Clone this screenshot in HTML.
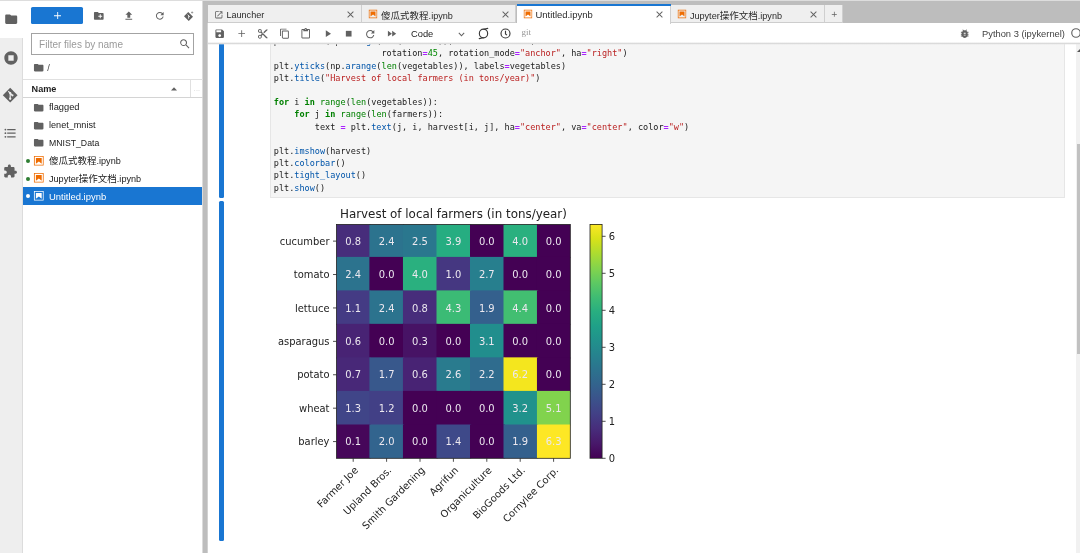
<!DOCTYPE html>
<html lang="zh">
<head>
<meta charset="utf-8">
<title>JupyterLab</title>
<style>
html,body{margin:0;padding:0}
body{width:1080px;height:553px;overflow:hidden;background:#fff;position:relative;
  font-family:"Liberation Sans","Noto Sans CJK SC",sans-serif;font-size:9.1px;color:#212121}
.abs{position:absolute}
svg{display:block}
.ico{position:absolute;fill:#616161}
/* dock background */
#dock{left:202.6px;top:0;width:878px;height:553px;background:#bdbdbd}
#main{left:207.7px;top:22.5px;width:873px;height:531px;background:#fff}
/* sidebar */
#sb{left:0;top:0;width:22.5px;height:553px;background:#eee;border-right:0.7px solid #dcdcdc;box-sizing:border-box}
#sbact{left:0;top:0;width:23px;height:38px;background:#fff}
#topline{left:0;top:0;width:1080px;height:1px;background:#dddddd}
/* file browser */
#newbtn{left:31.3px;top:6.5px;width:51.7px;height:17.5px;background:#1976d2;border-radius:1.6px}
#filter{left:31.3px;top:33px;width:162.7px;height:22px;box-sizing:border-box;border:1px solid #a3a3a3;background:#fff}
#filter span{position:absolute;left:6.8px;top:4.9px;font-size:10px;color:#9a9a9a;font-family:"Liberation Sans",sans-serif}
.row{position:absolute;left:23px;width:179.4px;height:17.8px;line-height:17.8px;white-space:nowrap}
.row .nm{position:absolute;left:26px;top:0.9px;font-size:9.1px}
.row .ico{margin-top:0.5px}
.row.sel{background:#1976d2;color:#fff}
.dot{position:absolute;left:3.4px;top:7.4px;width:4px;height:4px;border-radius:50%;background:#2e7d32}
.sel .dot{background:#fff}
/* tabs */
.tab{position:absolute;top:4.6px;height:18.4px;box-sizing:border-box;background:#efefef;border-right:1px solid #cfcfcf;border-bottom:1px solid #cdcdcd;line-height:17px;white-space:nowrap}
.tab.act{background:#fff;border-bottom:none;height:19px}
.tab.act:before{content:"";position:absolute;left:0;right:-1px;top:-0.3px;height:1.6px;background:#1976d2}
.tab .lbl{position:absolute;top:2.4px;font-size:9.1px;color:#2a2a2a}
.tab .ico{margin-top:1.3px}
.cj{font-size:9.5px}
/* toolbar */
#tb{left:207.7px;top:23px;width:873px;height:21px;background:#fff}
#tbsh{left:207.7px;top:42px;width:873px;height:3.4px;background:linear-gradient(rgba(255,255,255,0),rgba(218,218,218,1) 50%,rgba(228,228,228,0.55) 75%,rgba(240,240,240,0));z-index:5}
/* cell */
.coll{position:absolute;left:218.7px;width:5.6px;background:#1976d2;border-radius:1.5px}
#editor{left:270px;top:30px;width:794.6px;height:167.7px;box-sizing:border-box;background:#f5f5f5;border:1px solid #e6e6e6;overflow:hidden}
#code{position:absolute;left:2.8px;top:4.2px;font-family:"DejaVu Sans Mono","Liberation Mono",monospace;font-size:8.53px;color:#212121}
.cl{height:12.21px;line-height:12.21px;white-space:pre}
.k{color:#008000;font-weight:bold}.b{color:#008000}.n{color:#008800}.s{color:#ba2121}.o{color:#aa22ff;font-weight:bold}.p{color:#0055aa}
/* scrollbar */
#sbtrack{left:1076px;top:43px;width:4px;height:510px;background:#f1f1f1}
#sbthumb{left:1076.6px;top:144px;width:3.4px;height:210px;background:#c1c1c1}
</style>
</head>
<body>
<div id="root" class="abs" style="left:0;top:0;width:1080px;height:553px;will-change:transform">
<div id="dock" class="abs"></div>
<div id="main" class="abs"></div>
<div class="abs" style="left:202px;top:1px;width:1px;height:552px;background:rgba(189,189,189,0.55)"></div>
<div class="abs" style="left:207px;top:23px;width:1px;height:530px;background:rgba(255,255,255,0.3)"></div>

<!-- ===== left sidebar ===== -->
<div id="sb" class="abs"></div>
<div id="sbact" class="abs"></div>
<svg class="ico" style="left:3.8px;top:11.9px" width="14.4" height="14.4" viewBox="0 0 24 24"><path d="M10 4H4c-1.1 0-1.99.9-1.99 2L2 18c0 1.1.9 2 2 2h16c1.1 0 2-.9 2-2V8c0-1.1-.9-2-2-2h-8l-2-2z"/></svg>
<svg class="ico" style="left:2.6px;top:49.7px" width="16" height="16" viewBox="0 0 24 24"><path d="M12 2C6.48 2 2 6.48 2 12s4.48 10 10 10 10-4.48 10-10S17.52 2 12 2zm4 14H8V8h8v8z"/></svg>
<svg class="ico" style="left:2.4px;top:87.4px" width="16.4" height="16.4" viewBox="0 0 24 24"><path d="M12 1.2 22.8 12 12 22.8 1.2 12z"/><g fill="none" stroke="#eee" stroke-width="1.7"><path d="M9.2 6.2 14.6 11.6M12 9v8.3M14.9 12v0"/></g><circle cx="12" cy="17.2" r="1.7" fill="#eee"/><circle cx="15.2" cy="12.2" r="1.7" fill="#eee"/><circle cx="12" cy="9" r="1.7" fill="#eee"/></svg>
<svg class="ico" style="left:3.4px;top:125.7px" width="14.4" height="14.4" viewBox="0 0 24 24"><path d="M7,5H21V7H7V5M7,13V11H21V13H7M4,4.5A1.5,1.5 0 0,1 5.5,6A1.5,1.5 0 0,1 4,7.5A1.5,1.5 0 0,1 2.5,6A1.5,1.5 0 0,1 4,4.5M4,10.5A1.5,1.5 0 0,1 5.5,12A1.5,1.5 0 0,1 4,13.5A1.5,1.5 0 0,1 2.5,12A1.5,1.5 0 0,1 4,10.5M7,19V17H21V19H7M4,16.5A1.5,1.5 0 0,1 5.5,18A1.5,1.5 0 0,1 4,19.5A1.5,1.5 0 0,1 2.5,18A1.5,1.5 0 0,1 4,16.5Z"/></svg>
<svg class="ico" style="left:3.2px;top:164px" width="14.6" height="14.6" viewBox="0 0 24 24"><path d="M20.5 11H19V7c0-1.1-.9-2-2-2h-4V3.500C13 2.120 11.880 1 10.500 1S8 2.120 8 3.500V5H4c-1.100 0-1.990.9-1.990 2v3.800H3.500c1.490 0 2.700 1.210 2.700 2.700s-1.210 2.700-2.700 2.700H2V20c0 1.100.9 2 2 2h3.800v-1.500c0-1.490 1.210-2.700 2.700-2.700 1.490 0 2.700 1.210 2.700 2.700V22H17c1.100 0 2-.9 2-2v-4h1.500c1.380 0 2.500-1.120 2.500-2.500S21.880 11 20.500 11z"/></svg>


<!-- ===== file browser ===== -->
<div id="fb" class="abs" style="left:23px;top:1px;width:179px;height:552px;background:#fff"></div>
<div id="newbtn" class="abs"><svg class="abs" style="left:22.3px;top:5.2px" width="7.4" height="7.4" viewBox="0 0 10 10"><path d="M4.4 0h1.2v4.400H10v1.200H5.600V10H4.400V5.600H0V4.400h4.400z" fill="#fff"/></svg></div>
<svg class="ico" style="left:93.3px;top:10.3px" width="11.6" height="11.6" viewBox="0 0 24 24"><path d="M20 6h-8l-2-2H4c-1.110 0-1.990.89-1.990 2L2 18c0 1.110.89 2 2 2h16c1.110 0 2-.89 2-2V8c0-1.110-.89-2-2-2zm-1 8h-3v3h-2v-3h-3v-2h3V9h2v3h3v2z"/></svg>
<svg class="ico" style="left:123.2px;top:9.6px" width="11.6" height="11.6" viewBox="0 0 24 24"><path d="M9 16h6v-6h4l-7-7-7 7h4zm-4 2h14v2H5z"/></svg>
<svg class="ico" style="left:153.5px;top:9.700px" width="11.6" height="11.6" viewBox="0 0 18 18"><path d="M9 13.500c-2.490 0-4.500-2.010-4.500-4.500S6.510 4.500 9 4.500c1.240 0 2.360.52 3.170 1.330L10 8h5V3l-1.760 1.760C12.150 3.680 10.660 3 9 3 5.690 3 3.010 5.690 3.010 9S5.690 15 9 15c2.970 0 5.430-2.160 5.900-5h-1.520c-.46 2-2.240 3.500-4.380 3.500z"/></svg>
<svg class="ico" style="left:183px;top:10px" width="12" height="12" viewBox="0 0 24 24"><path d="M10.500 4.200 20 13.700 11.500 22.200 2 12.700z"/><path d="M9.200 9.200 13.800 13.800M11.200 11.200v6" stroke="#fff" stroke-width="1.6" fill="none"/><path d="M18.300 2.800v4.400M16.100 5h4.400" stroke="#8a8a8a" stroke-width="1.500" fill="none"/></svg>
<div id="filter" class="abs"><span>Filter files by name</span><svg class="ico" style="left:146.5px;top:4.300px" width="11.6" height="11.6" viewBox="0 0 18 18"><path d="M12.100,10.900h-0.700l-0.200-0.200c0.800-0.900,1.300-2.200,1.300-3.500c0-3-2.400-5.400-5.400-5.400S1.800,4.200,1.800,7.100s2.400,5.400,5.400,5.400 c1.300,0,2.500-0.500,3.500-1.300l0.200,0.200v0.700l4.100,4.100l1.200-1.200L12.100,10.900z M7.100,10.900c-2.100,0-3.700-1.700-3.700-3.700s1.700-3.700,3.700-3.700s3.700,1.700,3.700,3.700 S9.200,10.900,7.100,10.900z"/></svg></div>
<svg class="ico" style="left:32.8px;top:61.8px" width="11.4" height="11.4" viewBox="0 0 24 24"><path d="M10 4H4c-1.100 0-1.990.9-1.990 2L2 18c0 1.100.9 2 2 2h16c1.100 0 2-.9 2-2V8c0-1.100-.9-2-2-2h-8l-2-2z"/></svg>
<div class="abs" style="left:47.2px;top:62.8px;font-size:9.3px;color:#424242">/</div>
<!-- header -->
<div class="abs" style="left:23px;top:79px;width:179.6px;height:0.8px;background:#e0e0e0"></div>
<div class="abs" style="left:23px;top:97px;width:179.6px;height:0.8px;background:#d4d4d4"></div>
<div class="abs" style="left:31.6px;top:84.2px;font-size:9.1px;font-weight:bold;color:#212121">Name</div>
<svg class="ico" style="left:171.3px;top:86.6px" width="6" height="4" viewBox="0 0 6 4"><path d="M0 3.600 3 0.300 6 3.600z"/></svg>
<div class="abs" style="left:190px;top:79.7px;width:0.7px;height:17px;background:#e0e0e0"></div>
<div class="abs" style="left:193.8px;top:85px;font-size:7px;color:#d0d0d0;letter-spacing:0.2px">...</div>
<!-- rows -->
<div class="row" style="top:98.1px"><svg class="ico" style="left:9.600px;top:3.300px" width="11.4" height="11.4" viewBox="0 0 24 24"><path d="M10 4H4c-1.100 0-1.990.9-1.990 2L2 18c0 1.100.9 2 2 2h16c1.100 0 2-.9 2-2V8c0-1.100-.9-2-2-2h-8l-2-2z"/></svg><span class="nm" style="font-size:9.3px">flagged</span></div>
<div class="row" style="top:115.9px"><svg class="ico" style="left:9.600px;top:3.300px" width="11.4" height="11.4" viewBox="0 0 24 24"><path d="M10 4H4c-1.100 0-1.990.9-1.990 2L2 18c0 1.100.9 2 2 2h16c1.100 0 2-.9 2-2V8c0-1.100-.9-2-2-2h-8l-2-2z"/></svg><span class="nm">lenet_mnist</span></div>
<div class="row" style="top:133.700px"><svg class="ico" style="left:9.600px;top:3.300px" width="11.4" height="11.4" viewBox="0 0 24 24"><path d="M10 4H4c-1.100 0-1.990.9-1.990 2L2 18c0 1.100.9 2 2 2h16c1.100 0 2-.9 2-2V8c0-1.100-.9-2-2-2h-8l-2-2z"/></svg><span class="nm" style="font-size:8.700px">MNIST_Data</span></div>
<div class="row" style="top:151.500px"><i class="dot"></i><svg class="ico" style="left:10.000px;top:2.500px;fill:#ef6c00" width="11.600" height="11.600" viewBox="0 0 22 22"><path d="M18.700 3.300v15.400H3.300V3.300h15.400m1.500-1.500H1.800v18.300h18.300l.1-18.300z"/><path d="M16.500 16.500l-5.400-4.300-5.600 4.300v-11h11z"/></svg><span class="nm"><span class="cj">傻瓜式教程</span>.ipynb</span></div>
<div class="row" style="top:169.300px"><i class="dot"></i><svg class="ico" style="left:10.000px;top:2.500px;fill:#ef6c00" width="11.600" height="11.600" viewBox="0 0 22 22"><path d="M18.700 3.300v15.400H3.300V3.300h15.400m1.500-1.500H1.800v18.300h18.300l.1-18.300z"/><path d="M16.500 16.500l-5.400-4.300-5.600 4.300v-11h11z"/></svg><span class="nm">Jupyter<span class="cj">操作文档</span>.ipynb</span></div>
<div class="row sel" style="top:187.100px"><i class="dot"></i><svg class="ico" style="left:10.000px;top:2.500px;fill:#fff" width="11.600" height="11.600" viewBox="0 0 22 22"><path d="M18.700 3.300v15.400H3.300V3.300h15.400m1.500-1.500H1.800v18.300h18.300l.1-18.300z"/><path d="M16.500 16.500l-5.400-4.300-5.600 4.300v-11h11z"/></svg><span class="nm" style="font-size:9.45px">Untitled.ipynb</span></div>


<!-- ===== notebook ===== -->
<div class="coll" style="top:40px;height:157.7px"></div>
<div class="coll" style="top:201.2px;height:339.8px"></div>
<div id="editor" class="abs"><div id="code">
<div class="cl">plt.<span class="p">xticks</span>(np.<span class="p">arange</span>(<span class="b">len</span>(farmers)), labels<span class="o">=</span>farmers,</div>
<div class="cl">                     rotation<span class="o">=</span><span class="n">45</span>, rotation_mode<span class="o">=</span><span class="s">&quot;anchor&quot;</span>, ha<span class="o">=</span><span class="s">&quot;right&quot;</span>)</div>
<div class="cl">plt.<span class="p">yticks</span>(np.<span class="p">arange</span>(<span class="b">len</span>(vegetables)), labels<span class="o">=</span>vegetables)</div>
<div class="cl">plt.<span class="p">title</span>(<span class="s">&quot;Harvest of local farmers (in tons/year)&quot;</span>)</div>
<div class="cl">&nbsp;</div>
<div class="cl"><span class="k">for</span> i <span class="k">in</span> <span class="b">range</span>(<span class="b">len</span>(vegetables)):</div>
<div class="cl">    <span class="k">for</span> j <span class="k">in</span> <span class="b">range</span>(<span class="b">len</span>(farmers)):</div>
<div class="cl">        text <span class="o">=</span> plt.<span class="p">text</span>(j, i, harvest[i, j], ha<span class="o">=</span><span class="s">&quot;center&quot;</span>, va<span class="o">=</span><span class="s">&quot;center&quot;</span>, color<span class="o">=</span><span class="s">&quot;w&quot;</span>)</div>
<div class="cl">&nbsp;</div>
<div class="cl">plt.<span class="p">imshow</span>(harvest)</div>
<div class="cl">plt.<span class="p">colorbar</span>()</div>
<div class="cl">plt.<span class="p">tight_layout</span>()</div>
<div class="cl">plt.<span class="p">show</span>()</div>
</div></div>
<div class="abs" style="left:590.0px;top:224.4px;width:12.10px;height:233.90px;background:linear-gradient(to top,#440154 0.00%,#48186a 6.25%,#472d7b 12.50%,#424086 18.75%,#3b528b 25.00%,#33638d 31.25%,#2c728e 37.50%,#26828e 43.75%,#21918c 50.00%,#1fa088 56.25%,#28ae80 62.50%,#3fbc73 68.75%,#5ec962 75.00%,#84d44b 81.25%,#addc30 87.50%,#d8e219 93.75%,#fde725 100.00%)"></div>
<svg class="abs" style="left:0;top:0" width="1080" height="553" viewBox="0 0 1080 553" font-family="'DejaVu Sans',sans-serif">
<rect x="336.50" y="224.40" width="34.10" height="33.70" fill="#472d7b"/>
<rect x="369.40" y="224.40" width="34.75" height="33.70" fill="#2c738e"/>
<rect x="402.95" y="224.40" width="34.75" height="33.70" fill="#2a778e"/>
<rect x="436.50" y="224.40" width="34.70" height="33.70" fill="#26ad81"/>
<rect x="470.00" y="224.40" width="34.70" height="33.70" fill="#440154"/>
<rect x="503.50" y="224.40" width="34.65" height="33.70" fill="#2ab07f"/>
<rect x="536.95" y="224.40" width="33.35" height="33.70" fill="#440154"/>
<rect x="336.50" y="256.90" width="34.10" height="34.70" fill="#2c738e"/>
<rect x="369.40" y="256.90" width="34.75" height="34.70" fill="#440154"/>
<rect x="402.95" y="256.90" width="34.75" height="34.70" fill="#2ab07f"/>
<rect x="436.50" y="256.90" width="34.70" height="34.70" fill="#453781"/>
<rect x="470.00" y="256.90" width="34.70" height="34.70" fill="#277f8e"/>
<rect x="503.50" y="256.90" width="34.65" height="34.70" fill="#440154"/>
<rect x="536.95" y="256.90" width="33.35" height="34.70" fill="#440154"/>
<rect x="336.50" y="290.40" width="34.10" height="34.65" fill="#443b84"/>
<rect x="369.40" y="290.40" width="34.75" height="34.65" fill="#2c738e"/>
<rect x="402.95" y="290.40" width="34.75" height="34.65" fill="#472d7b"/>
<rect x="436.50" y="290.40" width="34.70" height="34.65" fill="#3bbb75"/>
<rect x="470.00" y="290.40" width="34.70" height="34.65" fill="#34608d"/>
<rect x="503.50" y="290.40" width="34.65" height="34.65" fill="#42be71"/>
<rect x="536.95" y="290.40" width="33.35" height="34.65" fill="#440154"/>
<rect x="336.50" y="323.85" width="34.10" height="34.70" fill="#482374"/>
<rect x="369.40" y="323.85" width="34.75" height="34.70" fill="#440154"/>
<rect x="402.95" y="323.85" width="34.75" height="34.70" fill="#471365"/>
<rect x="436.50" y="323.85" width="34.70" height="34.70" fill="#440154"/>
<rect x="470.00" y="323.85" width="34.70" height="34.70" fill="#218e8d"/>
<rect x="503.50" y="323.85" width="34.65" height="34.70" fill="#440154"/>
<rect x="536.95" y="323.85" width="33.35" height="34.70" fill="#440154"/>
<rect x="336.50" y="357.35" width="34.10" height="34.75" fill="#482878"/>
<rect x="369.40" y="357.35" width="34.75" height="34.75" fill="#38588c"/>
<rect x="402.95" y="357.35" width="34.75" height="34.75" fill="#482374"/>
<rect x="436.50" y="357.35" width="34.70" height="34.75" fill="#297b8e"/>
<rect x="470.00" y="357.35" width="34.70" height="34.75" fill="#2f6c8e"/>
<rect x="503.50" y="357.35" width="34.65" height="34.75" fill="#f4e61e"/>
<rect x="536.95" y="357.35" width="33.35" height="34.75" fill="#440154"/>
<rect x="336.50" y="390.90" width="34.10" height="34.80" fill="#404588"/>
<rect x="369.40" y="390.90" width="34.75" height="34.80" fill="#424086"/>
<rect x="402.95" y="390.90" width="34.75" height="34.80" fill="#440154"/>
<rect x="436.50" y="390.90" width="34.70" height="34.80" fill="#440154"/>
<rect x="470.00" y="390.90" width="34.70" height="34.80" fill="#440154"/>
<rect x="503.50" y="390.90" width="34.65" height="34.80" fill="#20928c"/>
<rect x="536.95" y="390.90" width="33.35" height="34.80" fill="#81d34d"/>
<rect x="336.50" y="424.50" width="34.10" height="33.80" fill="#46075a"/>
<rect x="369.40" y="424.50" width="34.75" height="33.80" fill="#32648e"/>
<rect x="402.95" y="424.50" width="34.75" height="33.80" fill="#440154"/>
<rect x="436.50" y="424.50" width="34.70" height="33.80" fill="#3e4989"/>
<rect x="470.00" y="424.50" width="34.70" height="33.80" fill="#440154"/>
<rect x="503.50" y="424.50" width="34.65" height="33.80" fill="#34608d"/>
<rect x="536.95" y="424.50" width="33.35" height="33.80" fill="#fde725"/>
<rect x="336.5" y="224.4" width="233.80" height="233.90" fill="none" stroke="#222" stroke-width="0.8"/>
<text x="353.20" y="244.71" font-size="9.93" fill="#ece8ef" text-anchor="middle">0.8</text>
<text x="386.60" y="244.71" font-size="9.93" fill="#ece8ef" text-anchor="middle">2.4</text>
<text x="420.00" y="244.71" font-size="9.93" fill="#ece8ef" text-anchor="middle">2.5</text>
<text x="453.40" y="244.71" font-size="9.93" fill="#ece8ef" text-anchor="middle">3.9</text>
<text x="486.80" y="244.71" font-size="9.93" fill="#ece8ef" text-anchor="middle">0.0</text>
<text x="520.20" y="244.71" font-size="9.93" fill="#ece8ef" text-anchor="middle">4.0</text>
<text x="553.60" y="244.71" font-size="9.93" fill="#ece8ef" text-anchor="middle">0.0</text>
<text x="353.20" y="278.12" font-size="9.93" fill="#ece8ef" text-anchor="middle">2.4</text>
<text x="386.60" y="278.12" font-size="9.93" fill="#ece8ef" text-anchor="middle">0.0</text>
<text x="420.00" y="278.12" font-size="9.93" fill="#ece8ef" text-anchor="middle">4.0</text>
<text x="453.40" y="278.12" font-size="9.93" fill="#ece8ef" text-anchor="middle">1.0</text>
<text x="486.80" y="278.12" font-size="9.93" fill="#ece8ef" text-anchor="middle">2.7</text>
<text x="520.20" y="278.12" font-size="9.93" fill="#ece8ef" text-anchor="middle">0.0</text>
<text x="553.60" y="278.12" font-size="9.93" fill="#ece8ef" text-anchor="middle">0.0</text>
<text x="353.20" y="311.54" font-size="9.93" fill="#ece8ef" text-anchor="middle">1.1</text>
<text x="386.60" y="311.54" font-size="9.93" fill="#ece8ef" text-anchor="middle">2.4</text>
<text x="420.00" y="311.54" font-size="9.93" fill="#ece8ef" text-anchor="middle">0.8</text>
<text x="453.40" y="311.54" font-size="9.93" fill="#ece8ef" text-anchor="middle">4.3</text>
<text x="486.80" y="311.54" font-size="9.93" fill="#ece8ef" text-anchor="middle">1.9</text>
<text x="520.20" y="311.54" font-size="9.93" fill="#ece8ef" text-anchor="middle">4.4</text>
<text x="553.60" y="311.54" font-size="9.93" fill="#ece8ef" text-anchor="middle">0.0</text>
<text x="353.20" y="344.95" font-size="9.93" fill="#ece8ef" text-anchor="middle">0.6</text>
<text x="386.60" y="344.95" font-size="9.93" fill="#ece8ef" text-anchor="middle">0.0</text>
<text x="420.00" y="344.95" font-size="9.93" fill="#ece8ef" text-anchor="middle">0.3</text>
<text x="453.40" y="344.95" font-size="9.93" fill="#ece8ef" text-anchor="middle">0.0</text>
<text x="486.80" y="344.95" font-size="9.93" fill="#ece8ef" text-anchor="middle">3.1</text>
<text x="520.20" y="344.95" font-size="9.93" fill="#ece8ef" text-anchor="middle">0.0</text>
<text x="553.60" y="344.95" font-size="9.93" fill="#ece8ef" text-anchor="middle">0.0</text>
<text x="353.20" y="378.36" font-size="9.93" fill="#ece8ef" text-anchor="middle">0.7</text>
<text x="386.60" y="378.36" font-size="9.93" fill="#ece8ef" text-anchor="middle">1.7</text>
<text x="420.00" y="378.36" font-size="9.93" fill="#ece8ef" text-anchor="middle">0.6</text>
<text x="453.40" y="378.36" font-size="9.93" fill="#ece8ef" text-anchor="middle">2.6</text>
<text x="486.80" y="378.36" font-size="9.93" fill="#ece8ef" text-anchor="middle">2.2</text>
<text x="520.20" y="378.36" font-size="9.93" fill="#ece8ef" text-anchor="middle">6.2</text>
<text x="553.60" y="378.36" font-size="9.93" fill="#ece8ef" text-anchor="middle">0.0</text>
<text x="353.20" y="411.78" font-size="9.93" fill="#ece8ef" text-anchor="middle">1.3</text>
<text x="386.60" y="411.78" font-size="9.93" fill="#ece8ef" text-anchor="middle">1.2</text>
<text x="420.00" y="411.78" font-size="9.93" fill="#ece8ef" text-anchor="middle">0.0</text>
<text x="453.40" y="411.78" font-size="9.93" fill="#ece8ef" text-anchor="middle">0.0</text>
<text x="486.80" y="411.78" font-size="9.93" fill="#ece8ef" text-anchor="middle">0.0</text>
<text x="520.20" y="411.78" font-size="9.93" fill="#ece8ef" text-anchor="middle">3.2</text>
<text x="553.60" y="411.78" font-size="9.93" fill="#ece8ef" text-anchor="middle">5.1</text>
<text x="353.20" y="445.19" font-size="9.93" fill="#ece8ef" text-anchor="middle">0.1</text>
<text x="386.60" y="445.19" font-size="9.93" fill="#ece8ef" text-anchor="middle">2.0</text>
<text x="420.00" y="445.19" font-size="9.93" fill="#ece8ef" text-anchor="middle">0.0</text>
<text x="453.40" y="445.19" font-size="9.93" fill="#ece8ef" text-anchor="middle">1.4</text>
<text x="486.80" y="445.19" font-size="9.93" fill="#ece8ef" text-anchor="middle">0.0</text>
<text x="520.20" y="445.19" font-size="9.93" fill="#ece8ef" text-anchor="middle">1.9</text>
<text x="553.60" y="445.19" font-size="9.93" fill="#ece8ef" text-anchor="middle">6.3</text>
<text x="453.40" y="218.2" font-size="11.9" fill="#222" text-anchor="middle">Harvest of local farmers (in tons/year)</text>
<line x1="333.0" y1="241.11" x2="336.5" y2="241.11" stroke="#222" stroke-width="0.8"/>
<text x="329.50" y="244.71" font-size="9.93" fill="#222" text-anchor="end">cucumber</text>
<line x1="333.0" y1="274.52" x2="336.5" y2="274.52" stroke="#222" stroke-width="0.8"/>
<text x="329.50" y="278.12" font-size="9.93" fill="#222" text-anchor="end">tomato</text>
<line x1="333.0" y1="307.94" x2="336.5" y2="307.94" stroke="#222" stroke-width="0.8"/>
<text x="329.50" y="311.54" font-size="9.93" fill="#222" text-anchor="end">lettuce</text>
<line x1="333.0" y1="341.35" x2="336.5" y2="341.35" stroke="#222" stroke-width="0.8"/>
<text x="329.50" y="344.95" font-size="9.93" fill="#222" text-anchor="end">asparagus</text>
<line x1="333.0" y1="374.76" x2="336.5" y2="374.76" stroke="#222" stroke-width="0.8"/>
<text x="329.50" y="378.36" font-size="9.93" fill="#222" text-anchor="end">potato</text>
<line x1="333.0" y1="408.18" x2="336.5" y2="408.18" stroke="#222" stroke-width="0.8"/>
<text x="329.50" y="411.78" font-size="9.93" fill="#222" text-anchor="end">wheat</text>
<line x1="333.0" y1="441.59" x2="336.5" y2="441.59" stroke="#222" stroke-width="0.8"/>
<text x="329.50" y="445.19" font-size="9.93" fill="#222" text-anchor="end">barley</text>
<line x1="353.20" y1="458.3" x2="353.20" y2="461.8" stroke="#222" stroke-width="0.8"/>
<text transform="translate(358.70,470.80) rotate(-45)" font-size="9.93" fill="#222" text-anchor="end">Farmer Joe</text>
<line x1="386.60" y1="458.3" x2="386.60" y2="461.8" stroke="#222" stroke-width="0.8"/>
<text transform="translate(392.10,470.80) rotate(-45)" font-size="9.93" fill="#222" text-anchor="end">Upland Bros.</text>
<line x1="420.00" y1="458.3" x2="420.00" y2="461.8" stroke="#222" stroke-width="0.8"/>
<text transform="translate(425.50,470.80) rotate(-45)" font-size="9.93" fill="#222" text-anchor="end">Smith Gardening</text>
<line x1="453.40" y1="458.3" x2="453.40" y2="461.8" stroke="#222" stroke-width="0.8"/>
<text transform="translate(458.90,470.80) rotate(-45)" font-size="9.93" fill="#222" text-anchor="end">Agrifun</text>
<line x1="486.80" y1="458.3" x2="486.80" y2="461.8" stroke="#222" stroke-width="0.8"/>
<text transform="translate(492.30,470.80) rotate(-45)" font-size="9.93" fill="#222" text-anchor="end">Organiculture</text>
<line x1="520.20" y1="458.3" x2="520.20" y2="461.8" stroke="#222" stroke-width="0.8"/>
<text transform="translate(525.70,470.80) rotate(-45)" font-size="9.93" fill="#222" text-anchor="end">BioGoods Ltd.</text>
<line x1="553.60" y1="458.3" x2="553.60" y2="461.8" stroke="#222" stroke-width="0.8"/>
<text transform="translate(559.10,470.80) rotate(-45)" font-size="9.93" fill="#222" text-anchor="end">Cornylee Corp.</text>
<rect x="590.0" y="224.4" width="12.10" height="233.90" fill="none" stroke="#222" stroke-width="0.8"/>
<line x1="602.1" y1="458.30" x2="605.6" y2="458.30" stroke="#222" stroke-width="0.8"/>
<text x="608.70" y="462.20" font-size="9.93" fill="#222">0</text>
<line x1="602.1" y1="421.30" x2="605.6" y2="421.30" stroke="#222" stroke-width="0.8"/>
<text x="608.70" y="425.20" font-size="9.93" fill="#222">1</text>
<line x1="602.1" y1="384.30" x2="605.6" y2="384.30" stroke="#222" stroke-width="0.8"/>
<text x="608.70" y="388.20" font-size="9.93" fill="#222">2</text>
<line x1="602.1" y1="347.30" x2="605.6" y2="347.30" stroke="#222" stroke-width="0.8"/>
<text x="608.70" y="351.20" font-size="9.93" fill="#222">3</text>
<line x1="602.1" y1="310.30" x2="605.6" y2="310.30" stroke="#222" stroke-width="0.8"/>
<text x="608.70" y="314.20" font-size="9.93" fill="#222">4</text>
<line x1="602.1" y1="273.30" x2="605.6" y2="273.30" stroke="#222" stroke-width="0.8"/>
<text x="608.70" y="277.20" font-size="9.93" fill="#222">5</text>
<line x1="602.1" y1="236.30" x2="605.6" y2="236.30" stroke="#222" stroke-width="0.8"/>
<text x="608.70" y="240.20" font-size="9.93" fill="#222">6</text>
</svg>

<!-- ===== tabs + toolbar ===== -->
<div id="tb" class="abs"></div><div id="tbsh" class="abs"></div>
<div class="tab" style="left:207.700px;width:154.400px"><svg class="ico" style="left:6.400px;top:3.800px" width="9.600" height="9.600" viewBox="0 0 24 24"><path d="M19 19H5V5h7V3H5a2 2 0 00-2 2v14a2 2 0 002 2h14c1.100 0 2-.9 2-2v-7h-2v7zM14 3v2h3.590l-9.830 9.830 1.410 1.410L19 6.410V10h2V3h-7z"/></svg><span class="lbl" style="left:18.700px">Launcher</span><svg class="ico" style="left:137.600px;top:3.300px" width="11" height="11" viewBox="0 0 24 24"><path d="M19 6.410L17.590 5 12 10.590 6.410 5 5 6.410 10.590 12 5 17.590 6.410 19 12 13.410 17.590 19 19 17.590 13.410 12z"/></svg></div>
<div class="tab" style="left:362.100px;width:154.400px"><svg class="ico" style="left:6.200px;top:3.300px;fill:#ef6c00" width="10" height="10" viewBox="0 0 22 22"><path d="M18.700 3.300v15.400H3.300V3.300h15.400m1.500-1.500H1.800v18.300h18.300l.1-18.300z"/><path d="M16.500 16.500l-5.400-4.300-5.600 4.300v-11h11z"/></svg><span class="lbl" style="left:19.000px"><span class="cj">傻瓜式教程</span>.ipynb</span><svg class="ico" style="left:138.000px;top:3.300px" width="11" height="11" viewBox="0 0 24 24"><path d="M19 6.410L17.590 5 12 10.590 6.410 5 5 6.410 10.590 12 5 17.590 6.410 19 12 13.410 17.590 19 19 17.590 13.410 12z"/></svg></div>
<div class="tab act" style="left:516.500px;width:154.400px"><svg class="ico" style="left:6.200px;top:3.300px;fill:#ef6c00" width="10" height="10" viewBox="0 0 22 22"><path d="M18.700 3.300v15.400H3.300V3.300h15.400m1.500-1.500H1.800v18.300h18.300l.1-18.300z"/><path d="M16.500 16.500l-5.400-4.300-5.600 4.300v-11h11z"/></svg><span class="lbl" style="left:19px;top:1.7px;font-size:9.45px">Untitled.ipynb</span><svg class="ico" style="left:137.800px;top:3.500px" width="11" height="11" viewBox="0 0 24 24"><path d="M19 6.410L17.590 5 12 10.590 6.410 5 5 6.410 10.590 12 5 17.590 6.410 19 12 13.410 17.590 19 19 17.590 13.410 12z"/></svg></div>
<div class="tab" style="left:670.900px;width:154.400px"><svg class="ico" style="left:6.200px;top:3.300px;fill:#ef6c00" width="10" height="10" viewBox="0 0 22 22"><path d="M18.700 3.300v15.400H3.300V3.300h15.400m1.500-1.500H1.800v18.300h18.300l.1-18.300z"/><path d="M16.500 16.500l-5.400-4.300-5.600 4.300v-11h11z"/></svg><span class="lbl" style="left:19px">Jupyter<span class="cj">操作文档</span>.ipynb</span><svg class="ico" style="left:137.500px;top:3.500px" width="11" height="11" viewBox="0 0 24 24"><path d="M19 6.410L17.590 5 12 10.590 6.410 5 5 6.410 10.590 12 5 17.590 6.410 19 12 13.410 17.590 19 19 17.590 13.410 12z"/></svg></div>
<div class="tab" style="left:825.300px;width:17.500px"><svg class="ico" style="left:4.300px;top:4.300px" width="8.600" height="8.600" viewBox="0 0 24 24"><path d="M19 13h-6v6h-2v-6H5v-2h6V5h2v6h6v2z"/></svg></div>

<svg class="ico" style="left:214.300px;top:28.1px" width="11.400" height="11.400" viewBox="0 0 24 24"><path d="M17 3H5c-1.110 0-2 .9-2 2v14c0 1.100.89 2 2 2h14c1.100 0 2-.9 2-2V7l-4-4zm-5 16c-1.660 0-3-1.340-3-3s1.340-3 3-3 3 1.340 3 3-1.340 3-3 3zm3-10H5V5h10v4z"/></svg>
<svg class="ico" style="left:235.600px;top:28.1px" width="11.400" height="11.400" viewBox="0 0 24 24"><path d="M19 12.900h-6.100V19h-1.800v-6.100H5v-1.800h6.100V5h1.800v6.100H19z"/></svg>
<svg class="ico" style="left:257.200px;top:28.0px" width="11.600" height="11.600" viewBox="0 0 24 24"><path d="M9.640 7.640c.23-.5.360-1.050.360-1.640 0-2.210-1.790-4-4-4S2 3.790 2 6s1.790 4 4 4c.59 0 1.140-.13 1.640-.36L10 12l-2.360 2.360C7.140 14.130 6.590 14 6 14c-2.210 0-4 1.790-4 4s1.790 4 4 4 4-1.790 4-4c0-.59-.13-1.140-.36-1.640L12 14l7 7h3v-1L9.640 7.640zM6 8c-1.100 0-2-.89-2-2s.9-2 2-2 2 .89 2 2-.9 2-2 2zm0 12c-1.100 0-2-.89-2-2s.9-2 2-2 2 .89 2 2-.9 2-2 2zm6-7.500c-.28 0-.5-.22-.5-.5s.22-.5.5-.5.500.22.500.5-.22.500-.5.500zM19 3l-6 6 2 2 7-7V3z"/></svg>
<svg class="ico" style="left:278.800px;top:28.0px" width="11.400" height="11.400" viewBox="0 0 18 18"><path d="M11.900,1H3.200C2.400,1,1.700,1.700,1.700,2.500v10.200h1.500V2.500h8.700V1z M14.100,3.900h-8c-0.800,0-1.500,0.700-1.500,1.500v10.200c0,0.800,0.700,1.500,1.500,1.500h8 c0.800,0,1.500-0.700,1.500-1.500V5.400C15.500,4.600,14.900,3.900,14.100,3.900z M14.100,15.500h-8V5.400h8V15.500z"/></svg>
<svg class="ico" style="left:300.400px;top:27.7px" width="11.400" height="11.400" viewBox="0 0 24 24"><path d="M19 2h-4.180C14.400.84 13.300 0 12 0c-1.300 0-2.400.84-2.820 2H5c-1.100 0-2 .9-2 2v16c0 1.100.9 2 2 2h14c1.100 0 2-.9 2-2V4c0-1.100-.9-2-2-2zm-7 0c.55 0 1 .45 1 1s-.45 1-1 1-1-.45-1-1 .45-1 1-1zm7 18H5V4h2v3h10V4h2v16z"/></svg>
<svg class="ico" style="left:322px;top:28.3px" width="11.400" height="11.400" viewBox="0 0 24 24"><path d="M8 5v14l11-7z"/></svg>
<svg class="ico" style="left:343.400px;top:28.3px" width="11.400" height="11.400" viewBox="0 0 24 24"><path d="M6 6h12v12H6z"/></svg>
<svg class="ico" style="left:364.300px;top:27.7px" width="12.400" height="12.400" viewBox="0 0 18 18"><path d="M9 13.500c-2.490 0-4.500-2.010-4.500-4.500S6.510 4.500 9 4.500c1.240 0 2.360.52 3.170 1.330L10 8h5V3l-1.760 1.760C12.150 3.680 10.660 3 9 3 5.690 3 3.010 5.690 3.010 9S5.690 15 9 15c2.970 0 5.430-2.160 5.900-5h-1.520c-.46 2-2.240 3.500-4.380 3.500z"/></svg>
<svg class="ico" style="left:386.200px;top:28.3px" width="11.400" height="11.400" viewBox="0 0 24 24"><path d="M4 18l8.500-6L4 6v12zm9-12v12l8.500-6L13 6z"/></svg>
<div class="abs" style="left:411px;top:28.6px;font-size:9.300px;color:#212121;font-family:'Liberation Sans',sans-serif">Code</div>
<svg class="ico" style="left:456.400px;top:28.9px" width="11" height="11" viewBox="0 0 18 18"><path d="M5.200 5.900L9 9.700l3.800-3.800L14 7.100l-5 5-5-5z"/></svg>
<svg class="ico" style="left:477px;top:27.2px" width="13" height="13" viewBox="0 0 26 26" fill="none"><g fill="none" stroke="#3a3a3a" stroke-width="2.3"><ellipse cx="13" cy="13" rx="8.300" ry="8.700"/><path d="M13.500 4.500 21.500 2.800M12.500 21.500 4.500 23.200" stroke-linecap="round"/></g></svg>
<svg class="ico" style="left:498.500px;top:26.6px" width="13" height="13" viewBox="0 0 26 26"><g fill="none" stroke="#3a3a3a" stroke-width="2.3"><circle cx="13" cy="13" r="9"/><path d="M13 7.500V14l3 2.200" stroke-width="2.300"/></g></svg>
<div class="abs" style="left:521.400px;top:26.5px;font-size:9.000px;color:#989898;font-family:'Liberation Serif',serif">git</div>
<svg class="ico" style="left:959.400px;top:28.0px" width="11.400" height="11.400" viewBox="0 0 24 24"><path d="M20 8h-2.810c-.45-.78-1.070-1.450-1.820-1.960L17 4.410 15.590 3l-2.170 2.170C12.960 5.060 12.490 5 12 5c-.49 0-.96.06-1.410.17L8.410 3 7 4.410l1.620 1.630C7.880 6.550 7.260 7.220 6.810 8H4v2h2.090c-.5.330-.9.660-.09 1v1H4v2h2v1c0 .34.040.67.090 1H4v2h2.810c1.040 1.790 2.970 3 5.190 3s4.150-1.210 5.190-3H20v-2h-2.090c.05-.33.090-.66.090-1v-1h2v-2h-2v-1c0-.34-.04-.67-.09-1H20V8zm-6 8h-4v-2h4v2zm0-4h-4v-2h4v2z"/></svg>
<div class="abs" style="left:982px;top:28.6px;font-size:9.330px;color:#424242;font-family:'Liberation Sans',sans-serif;white-space:nowrap">Python 3 (ipykernel)</div>
<svg class="ico" style="left:1069.600px;top:27px" width="12" height="12" viewBox="0 0 24 24"><circle cx="12" cy="12" r="8.500" fill="none" stroke="#616161" stroke-width="2.300"/></svg>


<div id="topline" class="abs"></div>
<div id="sbtrack" class="abs"></div>
<div id="sbthumb" class="abs"></div>
<svg class="abs" style="left:1076.5px;top:48.5px" width="4" height="3" viewBox="0 0 4 3"><path d="M0 3 3 0 6 3z" fill="#555"/></svg>
</div>
</body>
</html>
